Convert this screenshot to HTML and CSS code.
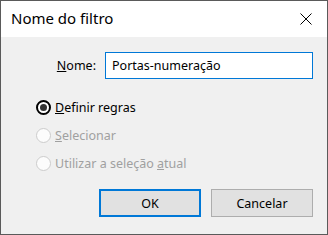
FILE: index.html
```html
<!DOCTYPE html>
<html lang="pt-BR">
<head>
    <meta charset="UTF-8">
    <title>Nome do filtro</title>
    <link rel="stylesheet" href="styles.css">
</head>
<body>
    <div class="window">
        <div class="title-bar">
            <span class="title">Nome do filtro</span>
            <svg class="close" width="12" height="12" viewBox="0 0 12 12">
                <path d="M0.5 0.5 L11.5 11.5 M11.5 0.5 L0.5 11.5" stroke="#000" stroke-width="1" fill="none"/>
            </svg>
        </div>

        <div class="content">
            <div class="name-row">
                <label for="nome"><u>N</u>ome:</label>
                <input id="nome" type="text" value="Portas-numeração">
            </div>

            <div class="options">
                <div class="option">
                    <span class="radio checked"></span>
                    <span><u>D</u>efinir regras</span>
                </div>
                <div class="option disabled">
                    <span class="radio"></span>
                    <span><u>S</u>elecionar</span>
                </div>
                <div class="option disabled">
                    <span class="radio"></span>
                    <span>Utilizar a seleção <u>a</u>tual</span>
                </div>
            </div>

            <div class="buttons">
                <button class="btn default">OK</button>
                <button class="btn">Cancelar</button>
            </div>
        </div>
    </div>
</body>
</html>
```

FILE: styles.css
```css
body {
    margin: 0;
    font-family: "Noto Sans", "Open Sans", sans-serif;
    font-size: 12px;
    color: #000;
}
.window {
    width: 328px;
    height: 235px;
    box-sizing: border-box;
    border: 1px solid #5a5a5a;
    background: #f0f0f0;
    display: flex;
    flex-direction: column;
}
.title-bar {
    height: 36px;
    background: #fff;
    display: flex;
    align-items: center;
    justify-content: space-between;
    padding: 0 15px 0 10px;
}
.title {
    font-size: 15px;
    margin-top: -2px;
}
.close {
    margin-top: -1px;
}
.content {
    flex: 1;
    padding: 15px 14px 0 0;
}
.name-row {
    display: flex;
    align-items: center;
    justify-content: flex-end;
    gap: 9px;
}
.name-row label {
    font-size: 12.5px;
}
.name-row input {
    width: 208px;
    height: 27px;
    box-sizing: border-box;
    border: 1px solid #0078d7;
    padding: 0 6px;
    font-family: inherit;
    font-size: 12.5px;
    outline: none;
}
.options {
    display: flex;
    flex-direction: column;
    gap: 11px;
    padding: 20px 0 0 35px;
}
.option {
    display: flex;
    align-items: center;
    gap: 4px;
    height: 17px;
    font-size: 12.5px;
}
.option.disabled {
    color: #a0a0a0;
}
.radio {
    width: 15px;
    height: 15px;
    box-sizing: border-box;
    border-radius: 50%;
    border: 1px solid #cccccc;
    background: #fcfcfc;
    display: flex;
    align-items: center;
    justify-content: center;
}
.radio.checked {
    border: 2px solid #000;
    background: #fff;
}
.radio.checked::after {
    content: "";
    width: 7px;
    height: 7px;
    border-radius: 50%;
    background: #333;
}
.buttons {
    display: flex;
    justify-content: flex-end;
    gap: 10px;
    margin-top: 17px;
}
.btn {
    width: 102px;
    height: 28px;
    box-sizing: border-box;
    background: #e1e1e1;
    border: 1px solid #adadad;
    font-family: inherit;
    font-size: 12.5px;
    padding: 0;
}
.btn.default {
    border: 2px solid #0078d7;
}
```
